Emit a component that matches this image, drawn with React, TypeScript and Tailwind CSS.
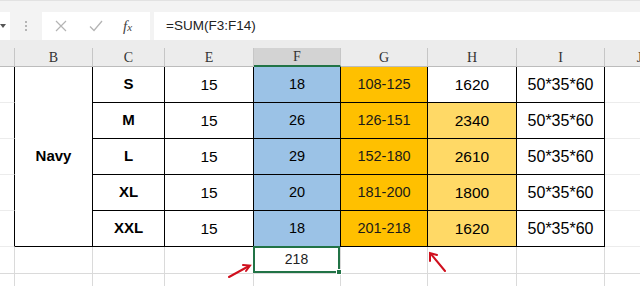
import React from 'react';

const rows = [
  { c: 'S', e: '15', f: '18', g: '108-125', h: '1620', hFill: false },
  { c: 'M', e: '15', f: '26', g: '126-151', h: '2340', hFill: true },
  { c: 'L', e: '15', f: '29', g: '152-180', h: '2610', hFill: true },
  { c: 'XL', e: '15', f: '20', g: '181-200', h: '1800', hFill: true },
  { c: 'XXL', e: '15', f: '18', g: '201-218', h: '1620', hFill: true },
];

const headers = ['', 'B', 'C', 'E', 'F', 'G', 'H', 'I', 'J'];

export default function App() {
  const cell = 'flex items-center justify-center border-r border-b border-black';
  const grid = 'border-r border-b border-[#dadada]';

  return (
    <div className="w-[640px] h-[286px] overflow-hidden bg-white relative" style={{ fontFamily: '"Liberation Sans", Arial, sans-serif' }}>
      {/* ribbon edge */}
      <div className="h-[12px] bg-[#f3f3f3] border-t border-[#e2e2e2]" />

      {/* formula bar */}
      <div className="h-[28px] bg-[#f3f3f3] flex items-stretch">
        <div className="w-[10px] bg-white flex items-center">
          <div className="w-0 h-0 border-l-[3px] border-r-[3px] border-t-[4px] border-l-transparent border-r-transparent border-t-[#555]" />
        </div>
        <div className="w-[32px] flex flex-col items-center justify-center gap-[2px]">
          <span className="w-[2px] h-[2px] bg-[#b5b5b5]" />
          <span className="w-[2px] h-[2px] bg-[#b5b5b5]" />
          <span className="w-[2px] h-[2px] bg-[#b5b5b5]" />
        </div>
        <div className="w-[108px] bg-white flex items-center">
          <svg width="12" height="12" viewBox="0 0 12 12" className="ml-[13px]">
            <path d="M1 1 L11 11 M11 1 L1 11" stroke="#b4b4b4" strokeWidth="1.2" fill="none" />
          </svg>
          <svg width="14" height="12" viewBox="0 0 14 12" className="ml-[22px]">
            <path d="M1 6.5 L5 10.5 L13 1" stroke="#b4b4b4" strokeWidth="1.3" fill="none" />
          </svg>
          <span className="ml-[20px] text-[15px] italic text-[#444]" style={{ fontFamily: '"Liberation Serif", serif' }}>
            f<span className="text-[11px]">x</span>
          </span>
        </div>
        <div className="w-[4px]" />
        <div className="flex-1 bg-white flex items-center pl-[12px] text-[13.5px] text-[#222]">=SUM(F3:F14)</div>
      </div>

      <div className="h-[8px] bg-[#ececec]" />

      {/* sheet */}
      <div className="grid grid-cols-[15px_78px_72px_89px_87px_87px_89px_88px_70px] grid-rows-[19px_36px_36px_36px_36px_36px_27px_27px]">
        {headers.map((h, i) => (
          <div
            key={'h' + i}
            className={
              'flex items-center justify-center text-[14px] text-[#333] border-r border-[#c6c6c6] ' +
              (h === 'F' ? 'bg-[#d3d3d3] border-b-2 border-b-[#217346]' : 'bg-[#ececec] border-b border-b-[#bcbcbc]')
            }
            style={{ fontFamily: '"Liberation Serif", serif' }}
          >
            {h}
          </div>
        ))}

        {rows.map((r, i) => (
          <React.Fragment key={r.c}>
            <div className="border-r border-black border-b border-b-[#ececec]" />
            {i === 0 && (
              <div className={cell + ' row-span-5 text-[15px] font-bold'}>Navy</div>
            )}
            <div className={cell + ' text-[15px] font-bold'}>{r.c}</div>
            <div className={cell + ' text-[15.5px]'}>{r.e}</div>
            <div className={cell + ' bg-[#9bc2e6] text-[14.5px]'}>{r.f}</div>
            <div className={cell + ' bg-[#ffc000] text-[14.5px] text-[#1a1a1a]'}>{r.g}</div>
            <div className={cell + ' text-[15.5px] ' + (r.hFill ? 'bg-[#ffd966]' : '')}>{r.h}</div>
            <div className={cell + ' text-[16px]'}>50*35*60</div>
            <div className="border-b border-[#ececec]" />
          </React.Fragment>
        ))}

        {[0, 1].map((row) =>
          headers.map((h, i) => (
            <div key={'b' + row + i} className={grid + ' flex items-center justify-center'}>
              {row === 0 && h === 'F' ? (
                <div className="relative w-[calc(100%+1px)] h-[calc(100%+1px)] -ml-[1px] -mt-[1px] border-2 border-[#217346] flex items-center justify-center text-[14px] text-[#222]">
                  218
                  <span className="absolute -right-[4px] -bottom-[4px] w-[6px] h-[6px] bg-[#217346] border border-white" />
                </div>
              ) : null}
            </div>
          ))
        )}
      </div>

      {/* red arrows */}
      <svg className="absolute left-0 top-0 pointer-events-none" width="640" height="286">
        <g stroke="#d0101e" strokeWidth="2" fill="none" strokeLinecap="round">
          <path d="M229 277 L249 266" />
          <path d="M243 265 L250 265.5 L246 271" />
          <path d="M445 271 L431 254" />
          <path d="M430 261 L430 253 L437 255" />
        </g>
      </svg>
    </div>
  );
}
